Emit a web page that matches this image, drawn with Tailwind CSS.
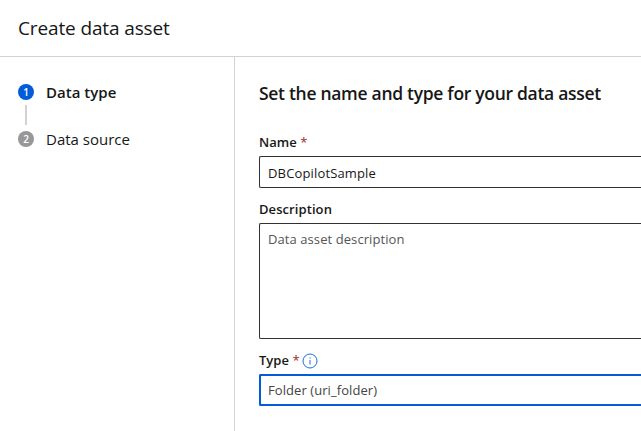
<!DOCTYPE html>
<html lang="en">
<head>
<meta charset="utf-8">
<title>Create data asset</title>
<script src="https://cdn.jsdelivr.net/npm/@tailwindcss/browser@4"></script>
</head>
<body class="bg-white font-['Open_Sans','Noto_Sans',sans-serif] text-[#171717]">
<div class="flex h-[431px] w-[641px] flex-col overflow-hidden">
  <header class="flex h-[57px] shrink-0 items-center border-b border-[#d2d2d2] pl-[18px]">
    <h1 class="whitespace-nowrap text-[19px] leading-[26px] tracking-[-0.13px]">Create data asset</h1>
  </header>
  <div class="flex min-h-0 flex-1">
    <nav class="w-[235px] shrink-0 border-r border-[#d2d2d2] pl-[18px] pt-[23px]">
      <div class="flex h-6 items-center gap-3">
        <span class="flex size-4 items-center justify-center rounded-full bg-[#015cda] text-[10px] font-semibold leading-none text-white">1</span>
        <span class="whitespace-nowrap text-[15px] font-semibold tracking-[0.02px]">Data type</span>
      </div>
      <div class="ml-[7px] mt-px h-5 w-[2px] bg-[#d2d2d2]"></div>
      <div class="mt-[2px] flex h-6 items-center gap-3">
        <span class="flex size-4 items-center justify-center rounded-full bg-[#979797] text-[10px] font-semibold leading-none text-white">2</span>
        <span class="whitespace-nowrap text-[15px]">Data source</span>
      </div>
    </nav>
    <main class="flex-1 pl-[24px] pt-[23px]">
      <h2 class="h-[26px] whitespace-nowrap text-[17.5px] font-semibold leading-[26px] tracking-[-0.3px]">Set the name and type for your data asset</h2>
      <label class="mb-px mt-[25px] flex h-6 items-center gap-[3.5px] text-[13px] font-semibold">Name <span class="font-normal text-[#a4262c]">*</span></label>
      <div class="flex h-8 items-center rounded-l-[2px] border border-r-0 border-[#323130] pl-2 pt-[3px] text-[13px] tracking-[0.15px]">DBCopilotSample</div>
      <label class="mt-[10px] flex h-6 items-center text-[13px] font-semibold tracking-[0.08px]">Description</label>
      <div class="mt-px h-[116px] rounded-l-[2px] border border-r-0 border-[#323130] pl-2 pt-[5px] text-[13px] leading-[20px] tracking-[0.08px] text-[#555]">Data asset description</div>
      <label class="mt-[10px] flex h-6 items-center gap-[3.5px] text-[13px] font-semibold">Type <span class="font-normal text-[#a4262c]">*</span>
        <svg class="-ml-px size-4" viewBox="0 0 16 16" fill="none" stroke="#1a6fe0"><circle cx="8" cy="8" r="7"/><path d="M8 7v4.5M8 4.5v1.2"/></svg>
      </label>
      <div class="mt-px flex h-8 items-center rounded-l-[2px] border-2 border-r-0 border-[#015cda] pl-[7px] pt-[2px] text-[13px] tracking-[0.07px] text-[#444]">Folder (uri_folder)</div>
    </main>
  </div>
</div>
</body>
</html>
